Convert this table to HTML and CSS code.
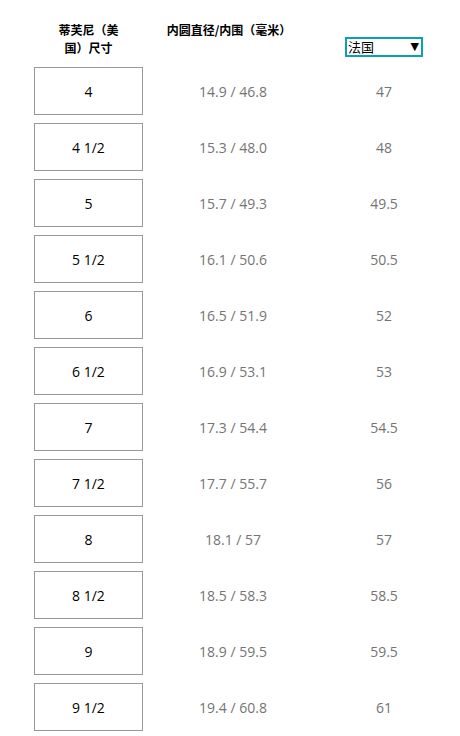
FILE: index.html
```html
<!DOCTYPE html>
<html lang="zh">
<head>
<meta charset="utf-8">
<title>尺寸表</title>
<link rel="stylesheet" href="styles.css">
</head>
<body>
<div class="chart">
  <div class="head">
    <div class="h-us">蒂芙尼（美国）尺寸</div>
    <div class="h-mm">内圆直径/内围（毫米）</div>
    <div class="h-sel">
      <div class="select"><span>法国</span><span class="arrow">▼</span></div>
    </div>
  </div>
  <div class="row"><div class="size">4</div><div class="mm">14.9 / 46.8</div><div class="fr">47</div></div>
  <div class="row"><div class="size">4 1/2</div><div class="mm">15.3 / 48.0</div><div class="fr">48</div></div>
  <div class="row"><div class="size">5</div><div class="mm">15.7 / 49.3</div><div class="fr">49.5</div></div>
  <div class="row"><div class="size">5 1/2</div><div class="mm">16.1 / 50.6</div><div class="fr">50.5</div></div>
  <div class="row"><div class="size">6</div><div class="mm">16.5 / 51.9</div><div class="fr">52</div></div>
  <div class="row"><div class="size">6 1/2</div><div class="mm">16.9 / 53.1</div><div class="fr">53</div></div>
  <div class="row"><div class="size">7</div><div class="mm">17.3 / 54.4</div><div class="fr">54.5</div></div>
  <div class="row"><div class="size">7 1/2</div><div class="mm">17.7 / 55.7</div><div class="fr">56</div></div>
  <div class="row"><div class="size">8</div><div class="mm">18.1 / 57</div><div class="fr">57</div></div>
  <div class="row"><div class="size">8 1/2</div><div class="mm">18.5 / 58.3</div><div class="fr">58.5</div></div>
  <div class="row"><div class="size">9</div><div class="mm">18.9 / 59.5</div><div class="fr">59.5</div></div>
  <div class="row"><div class="size">9 1/2</div><div class="mm">19.4 / 60.8</div><div class="fr">61</div></div>
</div>
</body>
</html>
```
FILE: styles.css
```css
html, body {
  margin: 0;
  padding: 0;
  background: #fff;
}
body {
  font-family: "Open Sans", "Noto Sans CJK SC", sans-serif;
  color: #000;
}
.chart {
  padding: 22px 0 0 34px;
  width: 411px;
}
.head {
  display: grid;
  grid-template-columns: 109px 180px 122px;
  height: 35px;
  margin-bottom: 10px;
}
.h-us {
  font-family: "Noto Sans CJK SC", sans-serif;
  font-weight: bold;
  font-size: 12px;
  line-height: 18px;
  width: 64px;
  justify-self: center;
  text-align: center;
  margin-top: -1px;
}
.h-mm {
  font-family: "Noto Sans CJK SC", sans-serif;
  font-weight: bold;
  font-size: 12px;
  line-height: 18px;
  text-align: center;
  padding-right: 8px;
  margin-top: -1px;
}
.h-sel {
  display: flex;
  justify-content: center;
  align-items: flex-end;
}
.select {
  box-sizing: border-box;
  width: 78px;
  height: 20px;
  border: 2px solid #0aa2b0;
  display: flex;
  align-items: center;
  justify-content: space-between;
  padding: 0 2px 0 1px;
  font-family: "Noto Sans CJK SC", sans-serif;
  font-size: 13px;
  line-height: 16px;
}
.arrow {
  font-size: 11px;
  font-family: "DejaVu Sans", sans-serif;
}
.row {
  display: grid;
  grid-template-columns: 109px 180px 122px;
  height: 48px;
  margin-bottom: 8px;
  align-items: center;
}
.size {
  box-sizing: border-box;
  height: 48px;
  border: 1px solid #999;
  display: flex;
  align-items: center;
  justify-content: center;
  font-size: 14px;
  color: #000;
}
.mm, .fr {
  text-align: center;
  font-size: 14px;
  color: #747474;
}
```
